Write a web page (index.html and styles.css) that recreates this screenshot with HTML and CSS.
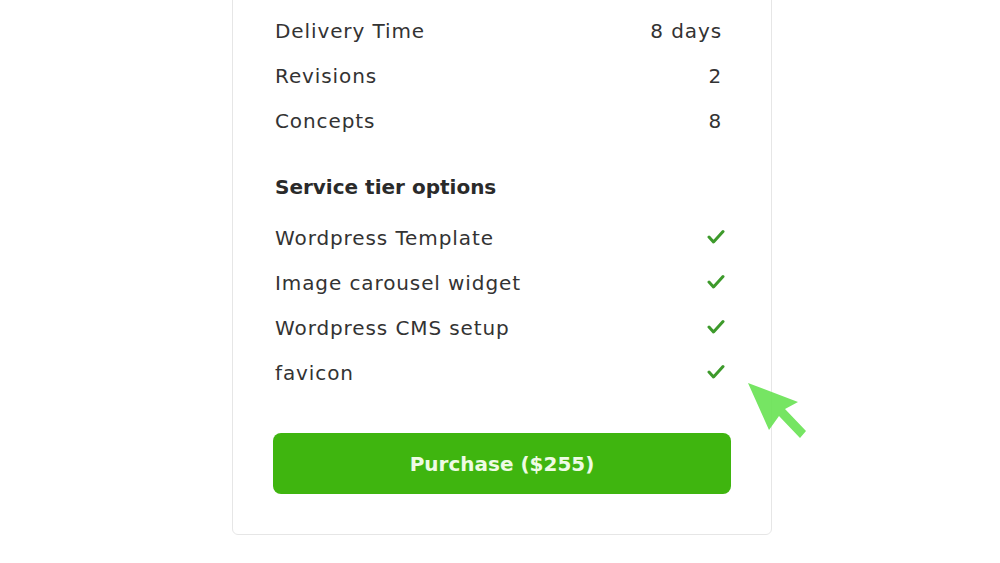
FILE: index.html
```html
<!DOCTYPE html>
<html>
<head>
    <title>Service package</title>
    <link rel="stylesheet" href="styles.css">
</head>
<body>
    <div class="card">
        <div class="row"><span>Delivery Time</span><span>8 days</span></div>
        <div class="row"><span>Revisions</span><span>2</span></div>
        <div class="row"><span>Concepts</span><span>8</span></div>

        <h3 class="section-title">Service tier options</h3>
        <div class="row">
            <span>Wordpress Template</span>
            <svg class="check" width="18" height="16" viewBox="0 0 18 16"><polyline points="2,8 6.5,13 16,2.5" /></svg>
        </div>
        <div class="row">
            <span>Image carousel widget</span>
            <svg class="check" width="18" height="16" viewBox="0 0 18 16"><polyline points="2,8 6.5,13 16,2.5" /></svg>
        </div>
        <div class="row">
            <span>Wordpress CMS setup</span>
            <svg class="check" width="18" height="16" viewBox="0 0 18 16"><polyline points="2,8 6.5,13 16,2.5" /></svg>
        </div>
        <div class="row">
            <span>favicon</span>
            <svg class="check" width="18" height="16" viewBox="0 0 18 16"><polyline points="2,8 6.5,13 16,2.5" /></svg>
        </div>

        <button class="purchase">Purchase ($255)</button>

        <svg class="cursor" width="64" height="64" viewBox="0 0 64 64">
            <path d="M0 0 L50 19 L37 26 L58 48 L52 55 L31 33 L21 47 Z" fill="#6be356"/>
        </svg>
    </div>
</body>
</html>
```

FILE: styles.css
```css
body {
    margin: 0;
    background: #fff;
    font-family: "DejaVu Sans", "Noto Sans", sans-serif;
    color: #333;
    overflow: hidden;
}
.card {
    position: relative;
    width: 458px;
    margin: -20px 0 0 232px;
    padding: 27px 40px 40px;
    border: 1px solid #e6e6e6;
    border-radius: 6px;
}
.row {
    display: flex;
    justify-content: space-between;
    align-items: center;
    height: 45px;
    padding: 0 9px 0 2px;
    font-size: 20px;
    letter-spacing: 0.9px;
}
.section-title {
    margin: 22px 0 5px;
    padding-left: 2px;
    height: 45px;
    line-height: 45px;
    font-size: 20px;
    font-weight: 700;
    color: #2a2a2a;
}
.check {
    margin-right: -3px;
    margin-top: -2px;
}
.check polyline {
    fill: none;
    stroke: #3d9a2b;
    stroke-width: 3;
    stroke-linecap: round;
    stroke-linejoin: round;
}
.purchase {
    display: block;
    width: 100%;
    height: 61px;
    margin-top: 38px;
    border: none;
    border-radius: 8px;
    background: #3fb50f;
    color: #eefbe4;
    font-family: inherit;
    font-size: 20px;
    font-weight: 700;
    cursor: pointer;
}
.cursor {
    position: absolute;
    left: 515px;
    top: 402px;
    opacity: 0.92;
}
```
